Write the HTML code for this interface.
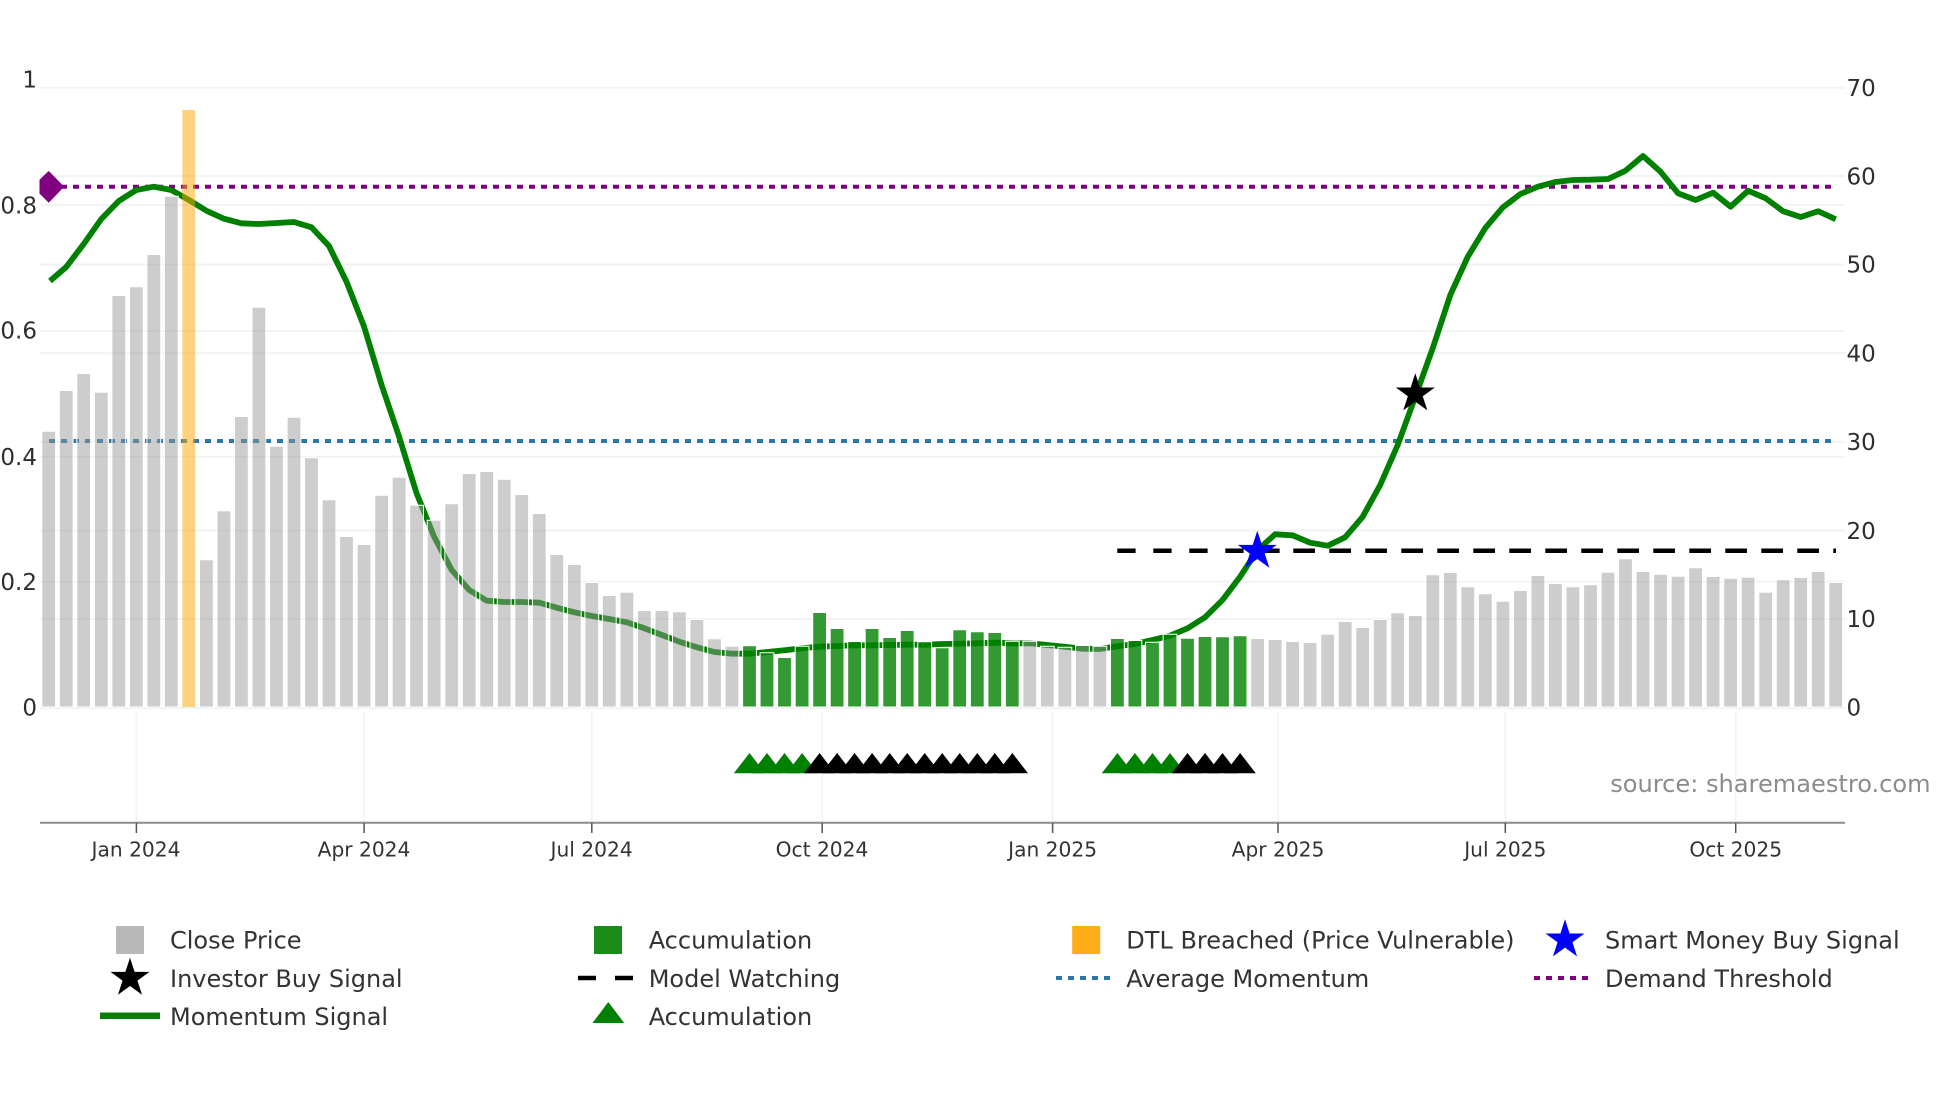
<!DOCTYPE html>
<html><head><meta charset="utf-8"><title>Chart</title>
<style>
html,body{margin:0;padding:0;background:#fff;width:1960px;height:1102px;overflow:hidden}
svg{display:block}
text{font-family:"DejaVu Sans","Liberation Sans",sans-serif;fill:#333}
.yl{font-size:23px;fill:#2e2e2e}
.xl{font-size:20.2px;text-anchor:middle}
.lg{font-size:24px}
</style></head><body>
<svg width="1960" height="1102" viewBox="0 0 1960 1102" xmlns="http://www.w3.org/2000/svg">
<defs>
<polygon id="s" points="0,-20.5 4.6,-6.33 19.5,-6.33 7.45,2.42 12.05,16.58 0,7.83 -12.05,16.58 -7.45,2.42 -19.5,-6.33 -4.6,-6.33"/>
<path id="t" d="M-15.7 20.3L0 0L15.7 20.3Z"/>
</defs>
<rect width="1960" height="1102" fill="#fff"/>
<!-- grid -->
<g stroke="#f1f2f5" stroke-width="2" fill="none">
<path d="M40 87.7H1845M40 176H1845M40 264.5H1845M40 353.3H1845M40 441.8H1845M40 530.5H1845M40 619H1845M40 708H1845"/>
<path d="M40 205H1845M40 331H1845M40 456.7H1845M40 581.7H1845"/>
<path stroke-width="1.6" d="M136.4 712V822M364.1 712V822M591.8 712V822M822.2 712V822M1052.6 712V822M1278 712V822M1505.3 712V822M1735.7 712V822"/>
</g>
<!-- threshold lines -->
<path d="M49 186.7H1831" stroke="#800080" stroke-width="4" stroke-dasharray="6 6" fill="none"/>
<path d="M49 441H1831" stroke="#2a78a8" stroke-width="4" stroke-dasharray="6 6" fill="none"/>
<!-- momentum -->
<polyline fill="none" stroke="#008000" stroke-width="5.8" stroke-linejoin="round" points="50,281 66.2,267 83.7,244 101.3,219 118.8,201 136.3,190 153.8,186.7 171.3,190 188.9,200 206.4,210.7 223.9,218.7 241.4,223.3 258.9,224 276.5,223 294,222 311.5,227.3 329,246 346.5,281.7 364.1,326.7 381.6,385 399.1,436.7 416.6,493.3 434.1,536.7 451.7,570 469.2,590 486.7,600.7 504.2,602 521.7,602 539.3,602.7 556.8,607.7 574.3,612.3 591.8,616 609.3,619 626.9,622.3 644.4,628.3 661.9,635 679.4,641.7 696.9,647.3 714.5,652 732,653.7 749.5,653.7 767,652 784.5,650.3 802.1,648.3 819.6,646.7 837.1,646 854.6,645.3 872.1,645.3 889.7,645 907.2,644.7 924.7,644.7 942.2,644 959.7,643.7 977.3,643.3 994.8,642.7 1012.3,643.3 1029.8,643.3 1047.3,645 1064.9,646.7 1082.4,648.7 1099.9,649 1117.4,646.3 1134.9,644 1152.5,640 1170,635.7 1187.5,628.3 1205,617.3 1222.5,600 1240.1,576.7 1257.6,550 1275.1,534.3 1292.6,535.3 1310.1,542.7 1327.7,545.7 1345.2,537.3 1362.7,516.7 1380.2,485 1397.7,445 1415.3,396.7 1432.8,348 1450.3,295 1467.8,256.7 1485.3,228 1502.9,207.3 1520.4,194 1537.9,186.7 1555.4,182 1572.9,180 1590.5,179.7 1608,179 1625.5,170.7 1643,156 1660.5,171.7 1678.1,193.3 1695.6,200 1713.1,192.7 1730.6,206.7 1748.1,190.7 1765.7,198.3 1783.2,211.3 1800.7,217 1818.2,211.3 1835.7,219.3"/>
<!-- bars gray -->
<path fill="rgba(150,150,150,.48)" stroke="#fff" stroke-width="1" d="M41.8 431.2V707h13.8V431.2zM59.3 390.5V707h13.8V390.5zM76.8 373.5V707h13.8V373.5zM94.4 392.2V707h13.8V392.2zM111.9 295.5V707h13.8V295.5zM129.4 286.8V707h13.8V286.8zM146.9 254.5V707h13.8V254.5zM164.4 196.2V707h13.8V196.2zM199.5 559.8V707h13.8V559.8zM217 510.8V707h13.8V510.8zM234.5 416.5V707h13.8V416.5zM252 307.2V707h13.8V307.2zM269.6 446.2V707h13.8V446.2zM287.1 417.2V707h13.8V417.2zM304.6 457.8V707h13.8V457.8zM322.1 499.8V707h13.8V499.8zM339.6 536.5V707h13.8V536.5zM357.2 544.5V707h13.8V544.5zM374.7 495.2V707h13.8V495.2zM392.2 477.2V707h13.8V477.2zM409.7 505.2V707h13.8V505.2zM427.2 520.2V707h13.8V520.2zM444.8 503.8V707h13.8V503.8zM462.3 473.5V707h13.8V473.5zM479.8 471.5V707h13.8V471.5zM497.3 479.2V707h13.8V479.2zM514.8 494.5V707h13.8V494.5zM532.4 513.5V707h13.8V513.5zM549.9 554.5V707h13.8V554.5zM567.4 564.5V707h13.8V564.5zM584.9 582.5V707h13.8V582.5zM602.4 595.5V707h13.8V595.5zM620 592.2V707h13.8V592.2zM637.5 610.5V707h13.8V610.5zM655 610.5V707h13.8V610.5zM672.5 611.8V707h13.8V611.8zM690 619.5V707h13.8V619.5zM707.6 638.8V707h13.8V638.8zM725.1 646.2V707h13.8V646.2zM1022.9 641.2V707h13.8V641.2zM1040.4 646.2V707h13.8V646.2zM1058 647.2V707h13.8V647.2zM1075.5 645.5V707h13.8V645.5zM1093 646.2V707h13.8V646.2zM1250.7 638.5V707h13.8V638.5zM1268.2 639.5V707h13.8V639.5zM1285.7 641.5V707h13.8V641.5zM1303.2 642.5V707h13.8V642.5zM1320.8 634.2V707h13.8V634.2zM1338.3 621.5V707h13.8V621.5zM1355.8 627.5V707h13.8V627.5zM1373.3 619.5V707h13.8V619.5zM1390.8 612.8V707h13.8V612.8zM1408.4 615.5V707h13.8V615.5zM1425.9 574.8V707h13.8V574.8zM1443.4 572.5V707h13.8V572.5zM1460.9 586.8V707h13.8V586.8zM1478.4 593.8V707h13.8V593.8zM1496 601.2V707h13.8V601.2zM1513.5 590.5V707h13.8V590.5zM1531 575.5V707h13.8V575.5zM1548.5 583.5V707h13.8V583.5zM1566 586.8V707h13.8V586.8zM1583.6 584.8V707h13.8V584.8zM1601.1 572.2V707h13.8V572.2zM1618.6 558.8V707h13.8V558.8zM1636.1 571.5V707h13.8V571.5zM1653.6 574.2V707h13.8V574.2zM1671.2 576.2V707h13.8V576.2zM1688.7 567.8V707h13.8V567.8zM1706.2 576.5V707h13.8V576.5zM1723.7 578.2V707h13.8V578.2zM1741.2 577.2V707h13.8V577.2zM1758.8 592.2V707h13.8V592.2zM1776.3 579.8V707h13.8V579.8zM1793.8 577.5V707h13.8V577.5zM1811.3 571.5V707h13.8V571.5zM1828.8 582.5V707h13.8V582.5z"/>
<!-- bars green -->
<path fill="rgba(0,128,0,.8)" stroke="#fff" stroke-width="1" d="M742.6 645.8V707h13.8V645.8zM760.1 652.8V707h13.8V652.8zM777.6 657.5V707h13.8V657.5zM795.2 646.2V707h13.8V646.2zM812.7 612.5V707h13.8V612.5zM830.2 628.5V707h13.8V628.5zM847.7 641.5V707h13.8V641.5zM865.2 628.5V707h13.8V628.5zM882.8 637.5V707h13.8V637.5zM900.3 630.5V707h13.8V630.5zM917.8 641.8V707h13.8V641.8zM935.3 647.8V707h13.8V647.8zM952.8 629.8V707h13.8V629.8zM970.4 631.8V707h13.8V631.8zM987.9 632.5V707h13.8V632.5zM1005.4 641.2V707h13.8V641.2zM1110.5 638.5V707h13.8V638.5zM1128 640.5V707h13.8V640.5zM1145.6 642.2V707h13.8V642.2zM1163.1 634.2V707h13.8V634.2zM1180.6 638.2V707h13.8V638.2zM1198.1 636.5V707h13.8V636.5zM1215.6 636.8V707h13.8V636.8zM1233.2 635.8V707h13.8V635.8z"/>
<!-- orange -->
<rect x="182.3" y="110" width="12.8" height="597" fill="rgba(255,165,0,.5)"/>
<!-- diamond -->
<path d="M40 180L48.7 171.6L63.5 186.7L48.7 202L40 193.4Z" fill="#800080" stroke="#800080" stroke-linejoin="round"/>
<!-- model watching -->
<path d="M1117.3 550.7H1135.6M1153.3 550.7H1171.6M1189.3 550.7H1207.6M1225.3 550.7H1243.6M1261.3 550.7H1279.6" stroke="#000" stroke-width="4.5" fill="none"/>
<path d="M1293.3 550.7H1836" stroke="#000" stroke-width="4.5" stroke-dasharray="21.7 14.3" fill="none"/>
<!-- stars -->
<use href="#s" x="1257.3" y="551.2" fill="#0000ff"/>
<use href="#s" x="1415.3" y="393.8" fill="#000"/>
<!-- triangles -->
<g fill="#008000">
<use href="#t" x="749.5" y="753"/><use href="#t" x="767" y="753"/><use href="#t" x="784.5" y="753"/><use href="#t" x="802.1" y="753"/>
<use href="#t" x="1117.4" y="753"/><use href="#t" x="1134.9" y="753"/><use href="#t" x="1152.5" y="753"/><use href="#t" x="1170" y="753"/>
</g>
<g fill="#000">
<use href="#t" x="819.6" y="753"/><use href="#t" x="837.1" y="753"/><use href="#t" x="854.6" y="753"/><use href="#t" x="872.1" y="753"/><use href="#t" x="889.7" y="753"/><use href="#t" x="907.2" y="753"/><use href="#t" x="924.7" y="753"/><use href="#t" x="942.2" y="753"/><use href="#t" x="959.7" y="753"/><use href="#t" x="977.3" y="753"/><use href="#t" x="994.8" y="753"/><use href="#t" x="1012.3" y="753"/>
<use href="#t" x="1187.5" y="753"/><use href="#t" x="1205" y="753"/><use href="#t" x="1222.5" y="753"/><use href="#t" x="1240.1" y="753"/>
</g>
<!-- x axis -->
<path d="M40 822.7H1845" stroke="#8c8c8c" stroke-width="2" fill="none"/>
<path d="M136.4 823V833M364.1 823V833M591.8 823V833M822.2 823V833M1052.6 823V833M1278 823V833M1505.3 823V833M1735.7 823V833" stroke="#555" stroke-width="1.5" fill="none"/>
<text class="xl" x="136" y="856.7">Jan 2024</text>
<text class="xl" x="364" y="856.7">Apr 2024</text>
<text class="xl" x="591.6" y="856.7">Jul 2024</text>
<text class="xl" x="822" y="856.7">Oct 2024</text>
<text class="xl" x="1052.6" y="856.7">Jan 2025</text>
<text class="xl" x="1278" y="856.7">Apr 2025</text>
<text class="xl" x="1505.3" y="856.7">Jul 2025</text>
<text class="xl" x="1735.7" y="856.7">Oct 2025</text>
<!-- y labels -->
<g text-anchor="end">
<text class="yl" x="37" y="87.4">1</text>
<text class="yl" x="37" y="213.4">0.8</text>
<text class="yl" x="37" y="338.6">0.6</text>
<text class="yl" x="37" y="465.1">0.4</text>
<text class="yl" x="37" y="590.1">0.2</text>
<text class="yl" x="37" y="715.4">0</text>
</g>
<text class="yl" x="1846.5" y="95.8">70</text>
<text class="yl" x="1846.5" y="184.4">60</text>
<text class="yl" x="1846.5" y="272.7">50</text>
<text class="yl" x="1846.5" y="361.7">40</text>
<text class="yl" x="1846.5" y="450.2">30</text>
<text class="yl" x="1846.5" y="538.9">20</text>
<text class="yl" x="1846.5" y="626.8">10</text>
<text class="yl" x="1846.5" y="715.4">0</text>
<text x="1610.2" y="792" font-size="24.1" style="fill:#8c8c8c">source: sharemaestro.com</text>
<!-- legend -->
<rect x="116" y="926" width="28" height="28" fill="#b8b8b8"/>
<use href="#s" x="130" y="978.2" fill="#000"/>
<rect x="100" y="1012.5" width="60" height="6.5" fill="#0a7d0a"/>
<text class="lg" x="170" y="948.6">Close Price</text>
<text class="lg" x="170" y="986.9">Investor Buy Signal</text>
<text class="lg" x="170" y="1025">Momentum Signal</text>
<rect x="594" y="926" width="28" height="28" fill="#1a8c1a"/>
<path d="M578 978H596M615 978H633" stroke="#000" stroke-width="4.5" fill="none"/>
<path d="M592.5 1023L608.3 1002L624.2 1023Z" fill="#008000"/>
<text class="lg" x="648.7" y="948.6">Accumulation</text>
<text class="lg" x="648.7" y="986.9">Model Watching</text>
<text class="lg" x="648.7" y="1025">Accumulation</text>
<rect x="1072.2" y="926" width="28" height="28" fill="#ffae1a"/>
<path d="M1056 978H1112" stroke="#2a78a8" stroke-width="4" stroke-dasharray="6 6" fill="none"/>
<text class="lg" x="1126.3" y="948.6">DTL Breached (Price Vulnerable)</text>
<text class="lg" x="1126.3" y="986.9">Average Momentum</text>
<use href="#s" x="1565" y="939.8" fill="#0000ff"/>
<path d="M1534 978H1590" stroke="#800080" stroke-width="4" stroke-dasharray="6 6" fill="none"/>
<text class="lg" x="1605" y="948.6">Smart Money Buy Signal</text>
<text class="lg" x="1605" y="986.9">Demand Threshold</text>
</svg>
</body></html>
